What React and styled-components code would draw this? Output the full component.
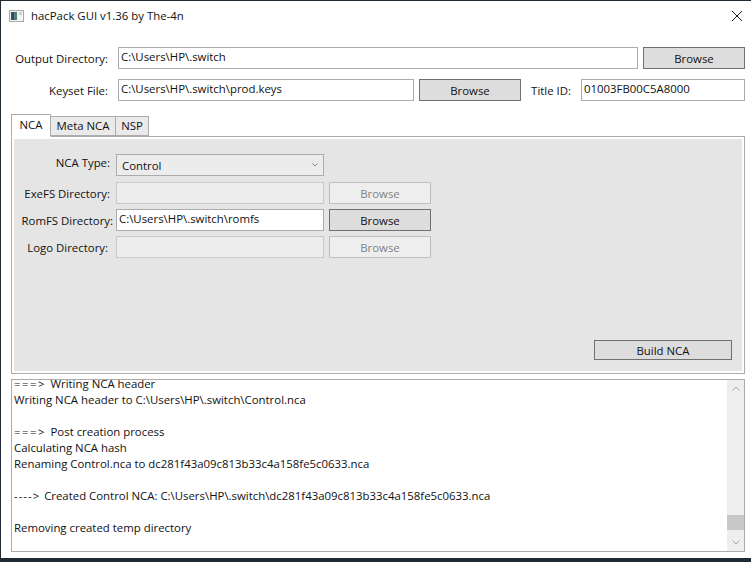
import React from 'react';
import styled, { createGlobalStyle } from 'styled-components';

const GlobalStyle = createGlobalStyle`
  html, body {
    margin: 0;
    padding: 0;
    background: #1f2a33;
  }
`;

const Desktop = styled.div`
  width: 751px;
  height: 562px;
  overflow: hidden;
  background: #1f2a33;
`;

const Window = styled.div`
  box-sizing: border-box;
  width: 750px;
  height: 557px;
  margin: 1px 0 0 1px;
  background: #fff;
  color: #111;
  font-family: 'Open Sans', 'Liberation Sans', sans-serif;
  font-size: 11.4px;
  display: flex;
  flex-direction: column;
`;

const TitleBar = styled.div`
  height: 29px;
  display: flex;
  align-items: center;
  padding: 0 9px 0 8px;
  gap: 7px;
`;

const TitleText = styled.span`
  flex: 1;
`;

const Body = styled.div`
  display: flex;
  flex-direction: column;
  padding: 17px 6px 0 10px;
  flex: 1;
`;

const Row = styled.div`
  display: flex;
  align-items: center;
  height: 22px;
  margin-bottom: 10px;
  gap: 5px;
`;

const Label = styled.label`
  width: ${(p) => p.$width || 102}px;
  margin-right: ${(p) => p.$gap || 0}px;
  text-align: right;
  white-space: nowrap;
`;

const Input = styled.div`
  box-sizing: border-box;
  height: 22px;
  width: ${(p) => (p.$width ? `${p.$width}px` : 'auto')};
  flex: ${(p) => (p.$width ? 'none' : 1)};
  border: 1px solid ${(p) => (p.$disabled ? '#c9c9c9' : '#ababab')};
  background: ${(p) => (p.$disabled ? '#ededed' : '#fff')};
  padding: 0 2px;
  line-height: 17px;
  white-space: nowrap;
`;

const Button = styled.button`
  box-sizing: border-box;
  height: ${(p) => p.$height || 22}px;
  width: ${(p) => p.$width || 102}px;
  padding: 0;
  border: 1px solid ${(p) => (p.disabled ? '#bfbfbf' : '#707070')};
  background: ${(p) => (p.disabled ? '#eeeeee' : '#dddddd')};
  color: ${(p) => (p.disabled ? '#838383' : '#111')};
  font: inherit;
`;

const TabStrip = styled.div`
  display: flex;
  align-items: flex-start;
  height: 23px;
  margin-top: 3px;
  margin-bottom: -1px;
  position: relative;
  z-index: 1;
`;

const Tab = styled.div`
  box-sizing: border-box;
  border: 1px solid #acacac;
  width: ${(p) => p.$width}px;
  margin-left: ${(p) => (p.$active ? 0 : '-1px')};
  margin-top: ${(p) => (p.$active ? 0 : 2)}px;
  height: ${(p) => (p.$active ? 23 : 20)}px;
  line-height: ${(p) => (p.$active ? 20 : 17)}px;
  text-align: center;
  background: ${(p) => (p.$active ? '#fff' : '#eaeaea')};
  border-bottom-color: ${(p) => (p.$active ? '#fff' : '#acacac')};
`;

const TabPanel = styled.div`
  box-sizing: border-box;
  height: 238px;
  border: 1px solid #acacac;
  background: #fff;
  padding: 2px;
  display: flex;
`;

const TabContent = styled.div`
  flex: 1;
  background: #e5e5e5;
  padding: 15px 10px 11px 0;
  display: flex;
  flex-direction: column;
`;

const FormRow = styled.div`
  display: grid;
  grid-template-columns: 97px 208px 102px;
  column-gap: 5px;
  height: 22px;
  margin-bottom: ${(p) => p.$gap || 5}px;
  align-items: center;
`;

const FormLabel = styled.label`
  justify-self: end;
  white-space: nowrap;
  margin-right: ${(p) => p.$inset || 0}px;
  margin-top: ${(p) => p.$raise || 0}px;
`;

const Select = styled.div`
  box-sizing: border-box;
  height: 22px;
  border: 1px solid #acacac;
  background: #ececec;
  padding: 0 5px;
  display: flex;
  align-items: center;
  justify-content: space-between;
`;

const Footer = styled.div`
  margin-top: auto;
  display: flex;
  justify-content: flex-end;
`;

const LogBox = styled.div`
  box-sizing: border-box;
  height: 173px;
  margin-top: 5px;
  border: 1px solid #acacac;
  display: flex;
  overflow: hidden;
`;

const LogText = styled.div`
  flex: 1;
  padding: 0 2px;
  white-space: pre;
`;

const LogLine = styled.div`
  height: ${(p) => (p.$first ? 12 : 16)}px;
  line-height: ${(p) => (p.$first ? 8 : 16)}px;
`;

const Prefix = styled.span`
  letter-spacing: ${(p) => p.$spacing}px;
`;

const ScrollBar = styled.div`
  width: 17px;
  background: #eeeeee;
  display: flex;
  flex-direction: column;
  align-items: center;
  justify-content: space-between;
`;

const ScrollTrack = styled.div`
  flex: 1;
  width: 100%;
  display: flex;
  flex-direction: column;
  justify-content: flex-end;
`;

const ScrollThumb = styled.div`
  height: 15px;
  margin-bottom: 4px;
  background: #c8c8c8;
`;

const ArrowSlot = styled.div`
  height: 17px;
  width: 100%;
  display: flex;
  align-items: center;
  justify-content: center;
`;

const logLines = [
  ['===> ', 'Writing NCA header', 1.5],
  ['', 'Writing NCA header to C:\\Users\\HP\\.switch\\Control.nca'],
  ['', ''],
  ['===> ', 'Post creation process', 1.5],
  ['', 'Calculating NCA hash'],
  ['', 'Renaming Control.nca to dc281f43a09c813b33c4a158fe5c0633.nca'],
  ['', ''],
  ['----> ', 'Created Control NCA: C:\\Users\\HP\\.switch\\dc281f43a09c813b33c4a158fe5c0633.nca', 1],
  ['', ''],
  ['', 'Removing created temp directory'],
];

const AppIcon = () => (
  <svg width="15" height="12" viewBox="0 0 15 12">
    <rect x="0.5" y="0.5" width="14" height="11" fill="#f4f4f4" stroke="#a9a9a9" />
    <rect x="2" y="2" width="6" height="8" fill="#4d7f78" />
    <rect x="2" y="2" width="3" height="8" fill="#33505e" />
    <rect x="10" y="2" width="3" height="3" fill="#c9d3d6" />
  </svg>
);

const CloseIcon = () => (
  <svg width="10" height="10" viewBox="0 0 10 10">
    <path d="M0 0L10 10M10 0L0 10" stroke="#222" strokeWidth="1" fill="none" />
  </svg>
);

const Chevron = ({ up, color = '#a6a6a6', size = 8 }) => (
  <svg width={size} height={size * 0.625} viewBox="0 0 8 5">
    <path d={up ? 'M0.5 4.5L4 1L7.5 4.5' : 'M0.5 0.5L4 4L7.5 0.5'} stroke={color} strokeWidth="1" fill="none" />
  </svg>
);

const App = () => (
  <Desktop>
    <GlobalStyle />
    <Window>
      <TitleBar>
        <AppIcon />
        <TitleText>hacPack GUI v1.36 by The-4n</TitleText>
        <CloseIcon />
      </TitleBar>
      <Body>
        <Row>
          <Label $width={97} $gap={5}>Output Directory:</Label>
          <Input>C:\Users\HP\.switch</Input>
          <Button>Browse</Button>
        </Row>
        <Row>
          <Label $width={97} $gap={5}>Keyset File:</Label>
          <Input $width={296}>C:\Users\HP\.switch\prod.keys</Input>
          <Button>Browse</Button>
          <Label $width={45} $gap={5}>Title ID:</Label>
          <Input>01003FB00C5A8000</Input>
        </Row>
        <TabStrip>
          <Tab $active $width={40}>NCA</Tab>
          <Tab $width={66}>Meta NCA</Tab>
          <Tab $width={34}>NSP</Tab>
        </TabStrip>
        <TabPanel>
          <TabContent>
            <FormRow $gap={6}>
              <FormLabel $inset={1} $raise={-5}>NCA Type:</FormLabel>
              <Select>
                Control
                <Chevron color="#666" size={6} />
              </Select>
            </FormRow>
            <FormRow>
              <FormLabel $inset={1}>ExeFS Directory:</FormLabel>
              <Input $disabled />
              <Button disabled>Browse</Button>
            </FormRow>
            <FormRow>
              <FormLabel $inset={-2}>RomFS Directory:</FormLabel>
              <Input>C:\Users\HP\.switch\romfs</Input>
              <Button>Browse</Button>
            </FormRow>
            <FormRow>
              <FormLabel $inset={3}>Logo Directory:</FormLabel>
              <Input $disabled />
              <Button disabled>Browse</Button>
            </FormRow>
            <Footer>
              <Button $width={138} $height={20}>Build NCA</Button>
            </Footer>
          </TabContent>
        </TabPanel>
        <LogBox>
          <LogText>
            {logLines.map(([prefix, text, spacing], index) => (
              <LogLine key={index} $first={index === 0}>
                {prefix && <Prefix $spacing={spacing}>{prefix}</Prefix>}
                {text}
              </LogLine>
            ))}
          </LogText>
          <ScrollBar>
            <ArrowSlot><Chevron up /></ArrowSlot>
            <ScrollTrack><ScrollThumb /></ScrollTrack>
            <ArrowSlot><Chevron /></ArrowSlot>
          </ScrollBar>
        </LogBox>
      </Body>
    </Window>
  </Desktop>
);

export default App;
